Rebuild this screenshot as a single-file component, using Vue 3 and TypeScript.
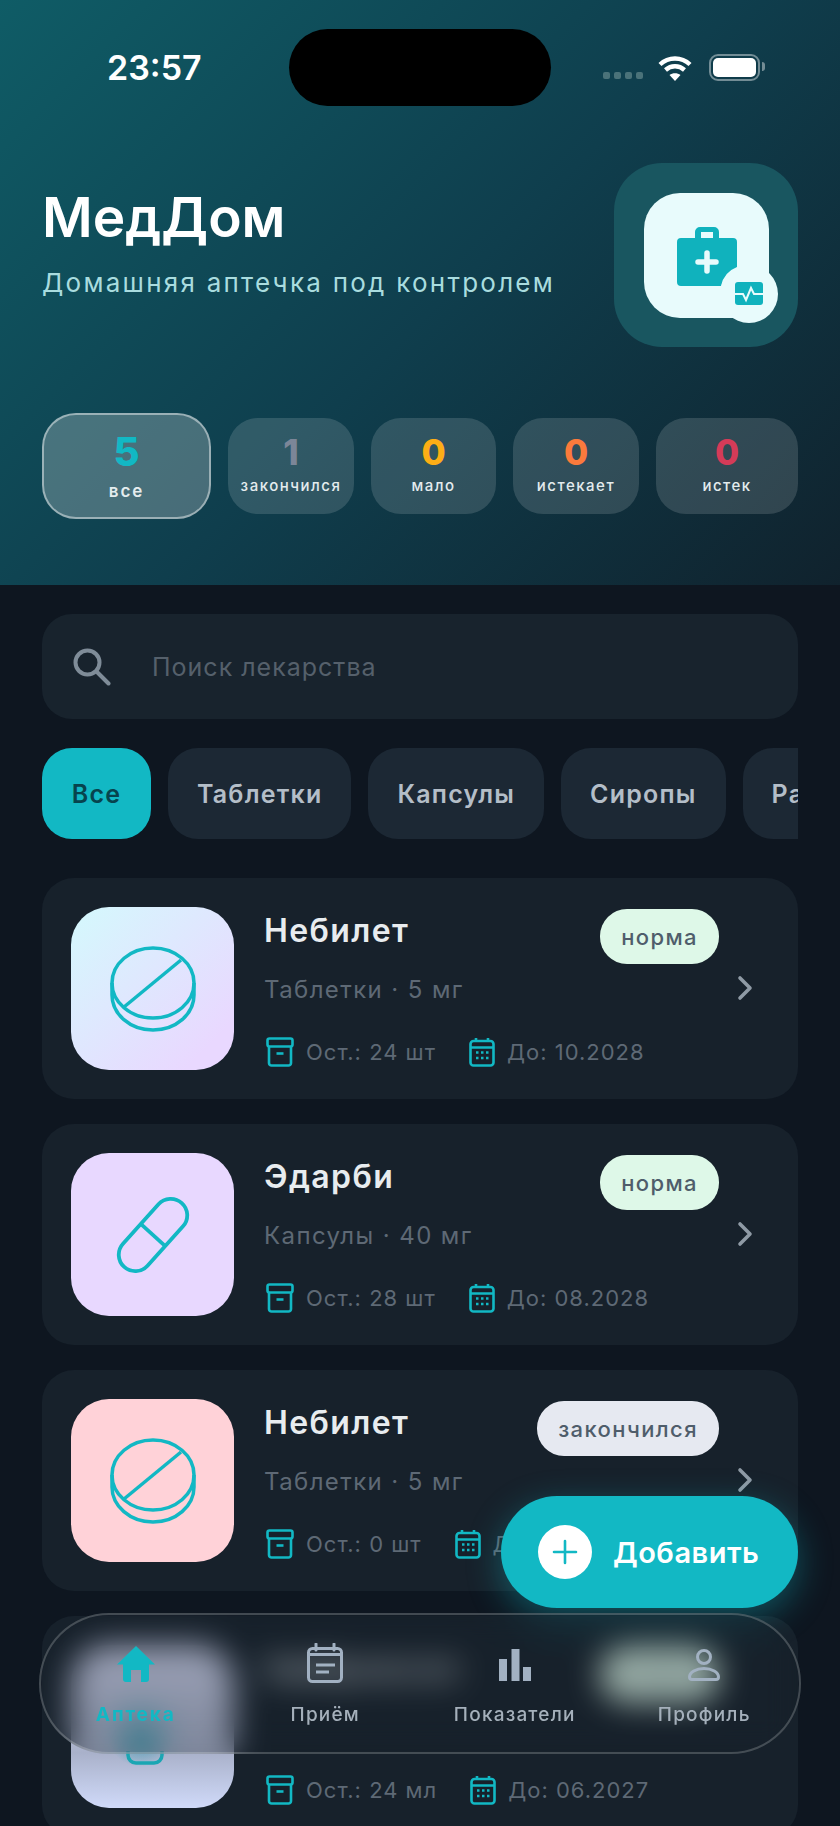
<template>
  <div class="page">
    <header class="hero">
      <div class="status-bar">
        <span class="time">23:57</span>
        <div class="island"></div>
        <div class="status-icons">
          <div class="signal"><i></i><i></i><i></i><i></i></div>
          <svg class="wifi" width="36" height="28" viewBox="0 0 36 28" fill="none" stroke="#fff" stroke-width="4.4">
            <path d="M3 10.500C11.500 2.500 24.500 2.500 33 10.500" />
            <path d="M8.500 16C14 11 22 11 27.500 16" />
            <path d="M18 27L12.500 21C15.500 18.500 20.500 18.500 23.500 21Z" fill="#fff" stroke="none" />
          </svg>
          <div class="battery"><div class="battery-fill"></div></div>
        </div>
      </div>

      <div class="brand">
        <div class="brand-text">
          <h1 class="brand-title">МедДом</h1>
          <p class="brand-sub">Домашняя аптечка под контролем</p>
        </div>
        <div class="logo-box">
          <div class="logo-inner">
            <svg class="logo-case" width="60" height="60" viewBox="0 0 60 60">
              <path d="M18 11V5a5 5 0 0 1 5-5h14a5 5 0 0 1 5 5v6h14a4 4 0 0 1 4 4v25a26 26 0 0 0-16 19H4a4 4 0 0 1-4-4V15a4 4 0 0 1 4-4ZM24 5v6h12V5Z" fill="#10b2bd" fill-rule="evenodd" />
              <path d="M30 26v18M21 35h18" stroke="#e8fbfc" stroke-width="5.500" stroke-linecap="round" />
            </svg>
            <div class="logo-badge">
              <svg width="28" height="24" viewBox="0 0 28 24">
                <rect width="28" height="23" rx="3" fill="#10b2bd" />
                <path d="M0 12h8l3 6 5-12 3 6h9" fill="none" stroke="#e8fbfc" stroke-width="2" />
              </svg>
            </div>
          </div>
        </div>
      </div>

      <div class="stats">
        <div v-for="s in stats" :key="s.label" class="stat" :class="{ 'stat-active': s.active }">
          <span class="stat-num" :style="{ color: s.color }">{{ s.value }}</span>
          <span class="stat-label">{{ s.label }}</span>
        </div>
      </div>
    </header>

    <main class="content">
      <div class="search">
        <svg width="38" height="38" viewBox="0 0 38 38" fill="none" stroke="#7f8c98" stroke-width="4" stroke-linecap="round">
          <circle cx="14.500" cy="14.500" r="12" />
          <path d="M23.500 23.500l12 12" />
        </svg>
        <span class="search-text">Поиск лекарства</span>
      </div>

      <div class="chips">
        <span v-for="(c, i) in chips" :key="c" class="chip" :class="{ 'chip-active': i === 0 }">{{ c }}</span>
      </div>

      <div class="cards">
        <article v-for="(m, i) in meds" :key="i" class="card">
          <div class="thumb" :class="m.thumb">
            <svg v-if="m.icon === 'tablet'" width="86" height="86" viewBox="0 0 86 86" fill="none" stroke="#12b8c4" stroke-width="3.500">
              <ellipse cx="43" cy="37" rx="41" ry="35" />
              <path d="M2 37v12c0 19 18 35 41 35s41-16 41-35V37" />
              <path d="M14 61L71 14" />
            </svg>
            <svg v-else-if="m.icon === 'capsule'" width="80" height="80" viewBox="0 0 80 80" fill="none" stroke="#12b8c4" stroke-width="3.800">
              <g transform="rotate(-48 40 40)">
                <rect x="-3" y="23.500" width="86" height="33" rx="16.500" />
                <path d="M40 23.500v33" />
              </g>
            </svg>
            <!-- only the foot of this bottle shows below the tab bar -->
            <svg v-else class="bottle" width="38" height="14" viewBox="0 0 38 14" fill="none" stroke="#1aa6b3" stroke-width="3.500">
              <path d="M2 0v4a8 8 0 0 0 8 8h18a8 8 0 0 0 8-8V0" />
            </svg>
          </div>

          <div class="card-body">
            <div class="card-top">
              <span class="card-title">{{ m.name }}</span>
              <span class="badge" :class="m.badgeClass">{{ m.badge }}</span>
            </div>
            <div class="card-sub">{{ m.sub }}</div>
            <div class="card-meta">
              <svg class="meta-box" width="28" height="30" viewBox="0 0 28 30" fill="none" stroke="#12b8c4" stroke-width="2.600">
                <rect x="1.500" y="1.500" width="25" height="8" rx="2" />
                <path d="M3 9.500V26a2.500 2.500 0 0 0 2.500 2.500h17A2.500 2.500 0 0 0 25 26V9.500" />
                <path d="M10.500 16.500h7" />
              </svg>
              <span class="meta-text meta-left">{{ m.left }}</span>
              <svg width="26" height="30" viewBox="0 0 26 30" fill="none" stroke="#12b8c4" stroke-width="2.600">
                <rect x="1.500" y="4" width="23" height="24.500" rx="3" />
                <path d="M1.500 10.500h23M7 1v4M19 1v4" />
                <path d="M7 15.500h2.500M12 15.500h2.500M17 15.500h2.500M7 21h2.500M12 21h2.500M17 21h2.500" stroke-width="2.500" />
              </svg>
              <span class="meta-text">{{ m.until }}</span>
            </div>
          </div>

          <svg class="chevron" :class="{ 'chevron-hidden': !m.sub }" width="16" height="26" viewBox="0 0 16 26" fill="none" stroke="#8f9aa5" stroke-width="3.600" stroke-linecap="round" stroke-linejoin="round">
            <path d="M3 3l10 10L3 23" />
          </svg>
        </article>
      </div>
    </main>

    <button class="fab" type="button">
      <span class="fab-circle">
        <svg width="28" height="28" viewBox="0 0 28 28" stroke="#12b8c4" stroke-width="2.600" stroke-linecap="round">
          <path d="M14 3v22M3 14h22" />
        </svg>
      </span>
      <span class="fab-text">Добавить</span>
    </button>

    <nav class="tabbar">
      <div class="tab tab-active">
        <svg width="40" height="36" viewBox="0 0 40 36">
          <path d="M20 0L39 18.500H33V33a3 3 0 0 1-3 3H25V24H15V36H10a3 3 0 0 1-3-3V18.500H1Z" fill="#12b8c4" />
        </svg>
        <span>Аптека</span>
      </div>
      <div class="tab">
        <svg width="36" height="42" viewBox="0 0 36 42" fill="none" stroke="#a2b1c2" stroke-width="3">
          <rect x="1.500" y="5.500" width="33" height="33" rx="4" />
          <path d="M1.500 11.500h33M9 1v6M27 1v6" stroke-linecap="round" />
          <path d="M9 22h19M9 29h13" />
        </svg>
        <span>Приём</span>
      </div>
      <div class="tab">
        <svg width="34" height="36" viewBox="0 0 34 36" fill="#a2b1c2">
          <rect x="1" y="13" width="8" height="22" />
          <rect x="13.500" y="3" width="8" height="32" />
          <rect x="25" y="21" width="8" height="14" />
        </svg>
        <span>Показатели</span>
      </div>
      <div class="tab">
        <svg width="34" height="36" viewBox="0 0 34 36" fill="none" stroke="#a2b1c2" stroke-width="3">
          <circle cx="17" cy="11" r="6.500" />
          <path d="M5 33.500c-1.500 0-2.500-1-2.500-2.500 0-4.500 6.500-8.500 14.500-8.500s14.500 4 14.500 8.500c0 1.500-1 2.500-2.500 2.500Z" />
        </svg>
        <span>Профиль</span>
      </div>
    </nav>
  </div>
</template>

<script setup lang="ts">
interface Stat {
  value: number
  label: string
  color: string
  active?: boolean
}

interface Med {
  name: string
  sub: string
  left: string
  until: string
  badge: string
  badgeClass: string
  thumb: string
  icon: 'tablet' | 'capsule' | 'bottle'
}

const stats: Stat[] = [
  { value: 5, label: 'все', color: '#12b8c4', active: true },
  { value: 1, label: 'закончился', color: '#7c8698' },
  { value: 0, label: 'мало', color: '#fdae16' },
  { value: 0, label: 'истекает', color: '#fb7a3c' },
  { value: 0, label: 'истек', color: '#d43b58' },
]

const chips = ['Все', 'Таблетки', 'Капсулы', 'Сиропы', 'Растворы']

const meds: Med[] = [
  { name: 'Небилет', sub: 'Таблетки · 5 мг', left: 'Ост.: 24 шт', until: 'До: 10.2028', badge: 'норма', badgeClass: 'badge-ok', thumb: 'thumb-blue', icon: 'tablet' },
  { name: 'Эдарби', sub: 'Капсулы · 40 мг', left: 'Ост.: 28 шт', until: 'До: 08.2028', badge: 'норма', badgeClass: 'badge-ok', thumb: 'thumb-lilac', icon: 'capsule' },
  { name: 'Небилет', sub: 'Таблетки · 5 мг', left: 'Ост.: 0 шт', until: 'До: 10.2028', badge: 'закончился', badgeClass: 'badge-out', thumb: 'thumb-pink', icon: 'tablet' },
  { name: 'Амброксол', sub: '', left: 'Ост.: 24 мл', until: 'До: 06.2027', badge: 'норма', badgeClass: 'badge-ok', thumb: 'thumb-periwinkle', icon: 'bottle' },
]
</script>

<style scoped>
.page {
  position: relative;
  width: 840px;
  height: 1826px;
  overflow: hidden;
  background: #0e1620;
  font-family: Inter, "Noto Sans", sans-serif;
}

.hero {
  height: 585px;
  box-sizing: border-box;
  padding: 29px 42px 0;
  background: linear-gradient(135deg, #0f5c66 0%, #0f3e4d 52%, #10222d 100%);
}

.status-bar {
  position: relative;
  height: 77px;
  display: flex;
  align-items: center;
  justify-content: space-between;
}

.time {
  margin-left: 65px;
  font-size: 34px;
  font-weight: 600;
  color: #fff;
}

.island {
  position: absolute;
  left: 247px;
  top: 0;
  width: 262px;
  height: 77px;
  border-radius: 39px;
  background: #000;
}

.status-icons {
  margin-right: 38px;
  display: flex;
  align-items: center;
  gap: 14px;
}

.signal {
  display: flex;
  gap: 4px;
  margin-top: 16px;
}

.signal i {
  width: 7px;
  height: 7px;
  border-radius: 2px;
  background: #4a7279;
}

.wifi {
  margin-right: 2px;
}

.battery {
  position: relative;
  box-sizing: border-box;
  width: 51px;
  height: 27px;
  padding: 2px;
  border: 2px solid rgba(255, 255, 255, 0.42);
  border-radius: 9px;
}

.battery::after {
  content: "";
  position: absolute;
  right: -7px;
  top: 6px;
  width: 3px;
  height: 9px;
  border-radius: 0 3px 3px 0;
  background: rgba(255, 255, 255, 0.42);
}

.battery-fill {
  height: 100%;
  border-radius: 5px;
  background: #fff;
}

.brand {
  margin-top: 57px;
  display: flex;
  justify-content: space-between;
}

.brand-text {
  padding-top: 21px;
}

.brand-title {
  margin: 0;
  font-size: 55px;
  line-height: 66px;
  font-weight: 600;
  color: #fff;
}

.brand-sub {
  margin: 17px 0 0;
  font-size: 26px;
  line-height: 32px;
  letter-spacing: 2.250px;
  color: #a9dcdf;
}

.logo-box {
  width: 184px;
  height: 184px;
  border-radius: 48px;
  background: #195660;
  display: flex;
  align-items: center;
  justify-content: center;
}

.logo-inner {
  position: relative;
  width: 125px;
  height: 125px;
  border-radius: 36px;
  background: #e8fbfc;
}

.logo-case {
  position: absolute;
  left: 33px;
  top: 34px;
}

.logo-badge {
  position: absolute;
  left: 76px;
  top: 72px;
  width: 58px;
  height: 58px;
  border-radius: 50%;
  background: #e8fbfc;
  display: flex;
  align-items: center;
  justify-content: center;
}

.stats {
  margin-top: 66px;
  display: grid;
  grid-template-columns: 169px 126px 125px 126px 142px;
  gap: 17px;
  align-items: center;
}

.stat {
  height: 96px;
  box-sizing: border-box;
  padding-bottom: 5px;
  border-radius: 30px;
  background: rgba(255, 255, 255, 0.14);
  display: flex;
  flex-direction: column;
  align-items: center;
  justify-content: center;
}

.stat-active {
  height: 106px;
  padding-bottom: 2px;
  border-radius: 34px;
  border: 2px solid rgba(255, 255, 255, 0.45);
  background: rgba(255, 255, 255, 0.24);
}

.stat-num {
  font-size: 35px;
  line-height: 42px;
  font-weight: 800;
}

.stat-active .stat-num {
  font-size: 40px;
  line-height: 46px;
}

.stat-label {
  margin-top: 3px;
  font-size: 15px;
  line-height: 20px;
  font-weight: 500;
  letter-spacing: 1.500px;
  color: #e4ecee;
}

.stat-active .stat-label {
  font-size: 17px;
  font-weight: 600;
  letter-spacing: 2px;
  margin-top: 6px;
}

.content {
  padding: 29px 42px 0;
}

.search {
  height: 105px;
  box-sizing: border-box;
  padding: 0 31px;
  border-radius: 30px;
  background: #18232d;
  display: flex;
  align-items: center;
  gap: 41px;
}

.search-text {
  font-size: 25px;
  letter-spacing: 1px;
  color: #55606b;
}

.chips {
  margin-top: 29px;
  display: flex;
  gap: 17px;
  overflow: hidden;
}

.chip {
  flex: none;
  height: 91px;
  padding: 0 29px;
  border-radius: 30px;
  background: #1c2834;
  display: flex;
  align-items: center;
  font-size: 25px;
  font-weight: 600;
  letter-spacing: 1.200px;
  color: #b4bec8;
}

.chip-active {
  padding: 0 29.750px;
  background: #12b8c4;
  color: #07434d;
}

.cards {
  margin-top: 39px;
  display: flex;
  flex-direction: column;
  gap: 25px;
}

.card {
  flex: none;
  height: 221px;
  box-sizing: border-box;
  padding: 0 45px 0 29px;
  border-radius: 32px;
  background: #17212b;
  display: flex;
  align-items: center;
}

.thumb {
  flex: none;
  width: 163px;
  height: 163px;
  border-radius: 38px;
  display: flex;
  align-items: center;
  justify-content: center;
}

.thumb-blue {
  background: linear-gradient(135deg, #d4f9fd 0%, #e9d8ff 85%);
}

.thumb-lilac {
  background: #e8d8ff;
}

.thumb-pink {
  background: #ffd2d8;
}

.thumb-periwinkle {
  align-items: flex-end;
  background:
    radial-gradient(circle 34px at 70px 88px, rgba(18, 150, 170, 0.75), transparent),
    linear-gradient(180deg, #d8dcf6 0%, #a9b1ca 66%, #d0daf9 100%);
}

.bottle {
  margin: 0 16px 43px 0;
}

.card-body {
  flex: 1;
  min-width: 0;
  margin: 0 0 1px 30px;
}

.card-top {
  height: 55px;
  display: flex;
  justify-content: space-between;
}

.card-title {
  font-size: 32px;
  line-height: 44px;
  font-weight: 600;
  letter-spacing: 1.400px;
  color: #e8ecef;
}

.badge {
  height: 55px;
  padding: 0 21px;
  border-radius: 27px;
  display: flex;
  align-items: center;
  font-size: 22px;
  font-weight: 500;
  letter-spacing: 1.400px;
  color: #4f5d6b;
}

.badge-ok {
  background: #def8e8;
}

.badge-out {
  background: #e6e9f1;
}

.card-sub {
  height: 30px;
  margin-top: 11px;
  font-size: 24px;
  line-height: 30px;
  letter-spacing: 1.400px;
  color: #5e6975;
}

.card-meta {
  margin-top: 32px;
  height: 30px;
  display: flex;
  align-items: center;
  white-space: nowrap;
}

.meta-box {
  margin-left: 2px;
}

.meta-text {
  margin-left: 12px;
  font-size: 22px;
  letter-spacing: 1px;
  color: #5e6975;
}

.meta-left {
  margin-right: 33px;
}

.chevron {
  flex: none;
  margin: 0 0 2px 18px;
}

.chevron-hidden {
  visibility: hidden;
}

.fab {
  position: absolute;
  right: 42px;
  top: 1496px;
  width: 297px;
  height: 112px;
  padding: 0 0 0 37px;
  border: 0;
  border-radius: 56px;
  background: #12b8c4;
  box-shadow: 0 10px 34px rgba(18, 184, 196, 0.38);
  display: flex;
  align-items: center;
  gap: 21px;
  font-family: inherit;
}

.fab-circle {
  width: 54px;
  height: 54px;
  border-radius: 50%;
  background: #fff;
  display: flex;
  align-items: center;
  justify-content: center;
}

.fab-text {
  font-size: 29px;
  font-weight: 600;
  letter-spacing: 0.500px;
  color: #fff;
}

.tabbar {
  position: absolute;
  left: 39px;
  right: 39px;
  top: 1613px;
  height: 141px;
  box-sizing: border-box;
  border: 2px solid rgba(255, 255, 255, 0.2);
  border-radius: 70px;
  background: rgba(24, 32, 42, 0.3);
  backdrop-filter: blur(16px);
  display: grid;
  grid-template-columns: repeat(4, 1fr);
}

.tab {
  position: relative;
  display: flex;
  flex-direction: column;
  align-items: center;
  justify-content: flex-start;
  padding-top: 28px;
}

.tab svg {
  height: 42px;
}

.tab span {
  margin-top: 18px;
  font-size: 19px;
  line-height: 24px;
  font-weight: 500;
  letter-spacing: 1.200px;
  color: #a5b0bb;
}

.tab-active span {
  font-weight: 700;
  letter-spacing: 1.900px;
  color: #12b8c4;
}
</style>

<style>
html,
body {
  margin: 0;
  background: #0e1620;
}
</style>
